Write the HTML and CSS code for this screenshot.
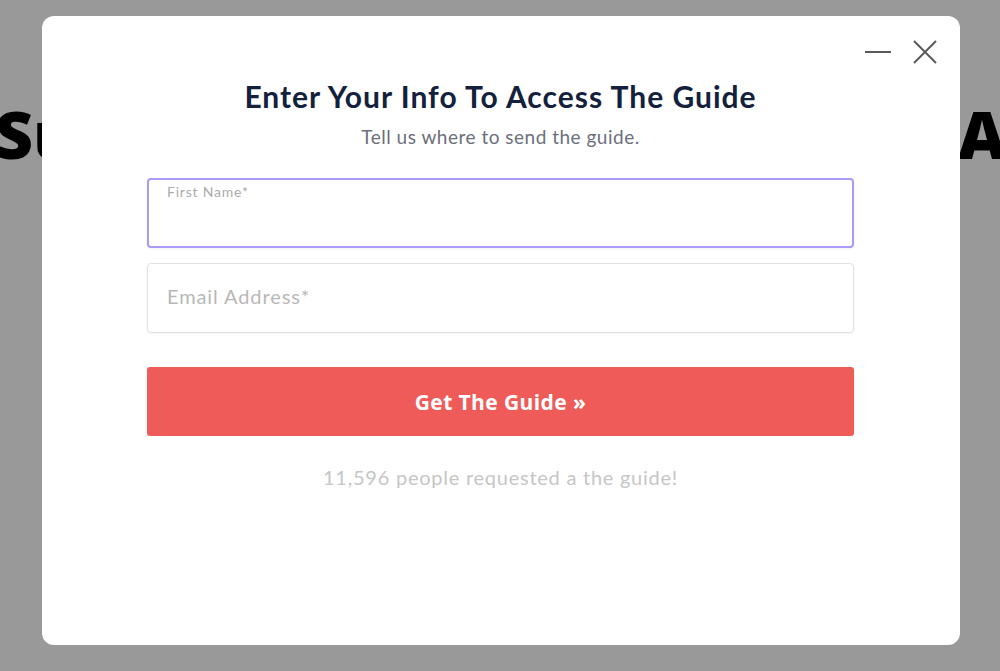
FILE: index.html
```html
<!DOCTYPE html>
<html lang="en">
<head>
<meta charset="utf-8">
<title>Access The Guide</title>
<link rel="stylesheet" href="styles.css">
</head>
<body>
<div class="page">
  <h1 class="bg-heading"><span class="bg-left">Subscribe Today And Get</span><span class="bg-right">Articles</span></h1>
</div>
<div class="modal" role="dialog">
  <div class="controls">
    <button class="ctl" aria-label="Minimize">
      <svg width="26" height="4" viewBox="0 0 26 4"><line x1="0" y1="2" x2="26" y2="2" stroke="#5a5a5a" stroke-width="2"/></svg>
    </button>
    <button class="ctl" aria-label="Close">
      <svg width="24" height="24" viewBox="0 0 24 24"><path d="M1 1 L23 23 M23 1 L1 23" stroke="#5a5a5a" stroke-width="2" fill="none"/></svg>
    </button>
  </div>
  <h2 class="title">Enter Your Info To Access The Guide</h2>
  <p class="subtitle">Tell us where to send the guide.</p>
  <form class="form">
    <label class="field field-active">
      <span class="field-label">First Name*</span>
      <input class="field-input" type="text">
    </label>
    <label class="field">
      <input class="field-input field-input-ph" type="email" placeholder="Email Address*">
    </label>
    <button class="submit" type="button">Get The Guide »</button>
  </form>
  <p class="count">11,596 people requested a the guide!</p>
</div>
</body>
</html>
```
FILE: styles.css
```css
html, body {
  margin: 0;
  padding: 0;
}
body {
  width: 1000px;
  height: 671px;
  background: #999999;
  overflow: hidden;
  font-family: "Lato", "Liberation Sans", sans-serif;
}
.page {
  padding-top: 93px;
  width: 1000px;
  overflow: hidden;
}
.bg-heading {
  margin: 0 0 0 -5px;
  display: flex;
  white-space: nowrap;
  font-family: "Open Sans", "Liberation Sans", sans-serif;
  font-weight: 800;
  font-size: 66px;
  line-height: 80px;
  color: #000;
}
.bg-left {
  width: 963px;
  flex: none;
  overflow: hidden;
}
.modal {
  position: absolute;
  left: 42px;
  top: 16px;
  width: 918px;
  height: 629px;
  background: #fff;
  border-radius: 12px;
  box-sizing: border-box;
  padding: 63px 106px 0 105px;
  display: flex;
  flex-direction: column;
}
.controls {
  position: absolute;
  top: 24px;
  right: 23px;
  display: flex;
  align-items: center;
  gap: 22px;
}
.ctl {
  border: 0;
  background: none;
  padding: 0;
  display: flex;
  cursor: pointer;
}
.title {
  margin: 0;
  text-align: center;
  font-weight: 700;
  font-size: 30px;
  letter-spacing: 1px;
  line-height: 34px;
  color: #14213d;
}
.subtitle {
  margin: 13px 0 0;
  text-align: center;
  font-size: 19px;
  letter-spacing: 0.5px;
  line-height: 22px;
  color: #6b6f7b;
}
.form {
  margin-top: 30px;
  display: flex;
  flex-direction: column;
}
.field {
  position: relative;
  display: block;
  height: 70px;
  box-sizing: border-box;
  border: 1px solid #e2e2e2;
  border-radius: 4px;
  box-shadow: 0 1px 3px rgba(0,0,0,0.06);
  margin-bottom: 15px;
}
.field-active {
  border: 2px solid #a89cf7;
}
.field-label {
  position: absolute;
  left: 18px;
  top: 4px;
  font-size: 14px;
  letter-spacing: 0.8px;
  line-height: 16px;
  color: #ababab;
}
.field-input {
  border: 0;
  outline: none;
  background: transparent;
  width: 100%;
  height: 100%;
  box-sizing: border-box;
  padding: 0 19px 4px;
  font-family: inherit;
  font-size: 20px;
  letter-spacing: 0.9px;
  color: #333;
}
.field-input-ph::placeholder {
  color: #b8b8b8;
}
.submit {
  margin-top: 19px;
  height: 69px;
  border: 0;
  border-radius: 3px;
  background: #ef5b58;
  color: #fff;
  font-family: "Open Sans", "Liberation Sans", sans-serif;
  font-weight: 700;
  font-size: 21px;
  letter-spacing: 0.4px;
  cursor: pointer;
}
.count {
  margin: 29px 0 0;
  text-align: center;
  font-size: 20px;
  letter-spacing: 0.75px;
  line-height: 24px;
  color: #c6c6c6;
}
```
